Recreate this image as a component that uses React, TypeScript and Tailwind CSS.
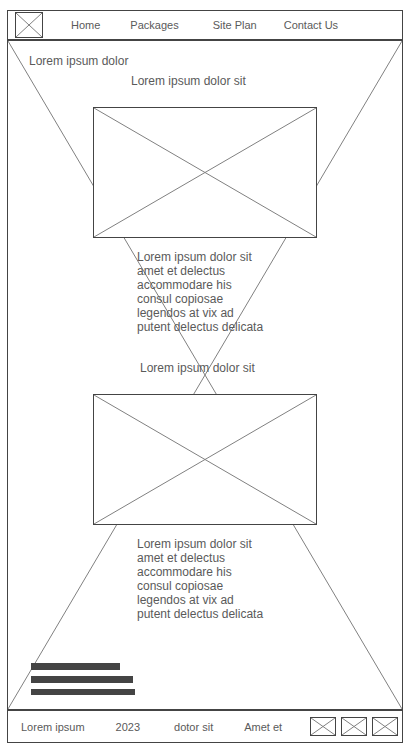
const excerpt =
  "Lorem ipsum dolor sit amet et delectus accommodare his consul copiosae legendos at vix ad putent delectus delicata";

function Cross() {
  return (
    <svg
      className="absolute inset-0 h-full w-full"
      viewBox="0 0 100 100"
      preserveAspectRatio="none"
      fill="none"
      stroke="#808080"
      aria-hidden="true"
    >
      <path d="M0 0L100 100M100 0L0 100" vectorEffect="non-scaling-stroke" />
    </svg>
  );
}

function Placeholder({ className }: { className: string }) {
  return (
    <div className={`relative shrink-0 border border-[#444444] bg-white ${className}`}>
      <Cross />
    </div>
  );
}

function Article({ headingClass }: { headingClass: string }) {
  return (
    <section className="mx-auto w-56">
      <h2 className={headingClass}>Lorem ipsum dolor sit</h2>
      <Placeholder className="mt-[19px] h-[131px] w-full" />
      <p className="mt-3 ml-11 w-[132px]">{excerpt}</p>
    </section>
  );
}

export default function App() {
  return (
    <div className="bg-white pt-[10px] pr-[6px] pb-[6px] pl-[7px] font-['Liberation_Sans',Arial,sans-serif] text-[12px] leading-[14px] text-[#5a5a5a]">
      <div className="border border-[#444444]">
        <header className="flex items-center border-b-2 border-[#444444] px-[7px] py-px text-[11px]">
          <Placeholder className="h-[26px] w-7" />
          <nav className="ml-7 flex whitespace-nowrap">
            <a href="#home">Home</a>
            <a href="#packages" className="ml-[30px]">Packages</a>
            <a href="#site-plan" className="ml-[34px]">Site Plan</a>
            <a href="#contact" className="ml-[27px]">Contact Us</a>
          </nav>
        </header>

        <main className="relative pt-[13px] pb-[14px]">
          <Cross />
          <div className="relative">
            <h1 className="mb-[6px] pl-[21px]">Lorem ipsum dolor</h1>
            <Article headingClass="pl-[38px]" />
            <div className="h-[27px]" />
            <Article headingClass="pl-[47px]" />
            <div className="mt-[42px] ml-[23px] flex flex-col gap-[6px]">
              <div className="h-[7px] w-[89px] bg-[#444444]" />
              <div className="h-[7px] w-[102px] bg-[#444444]" />
              <div className="h-[6px] w-[104px] bg-[#444444]" />
            </div>
          </div>
        </main>

        <footer className="flex items-center border-t-2 border-[#444444] py-[6px] pr-1 pl-[13px] text-[11px] whitespace-nowrap">
          <span>Lorem ipsum</span>
          <span className="ml-[31px]">2023</span>
          <span className="ml-[34px]">dotor sit</span>
          <span className="ml-[31px]">Amet et</span>
          <div className="ml-auto flex gap-[5px]">
            <Placeholder className="h-[19px] w-[26px]" />
            <Placeholder className="h-[19px] w-[26px]" />
            <Placeholder className="h-[19px] w-[26px]" />
          </div>
        </footer>
      </div>
    </div>
  );
}
